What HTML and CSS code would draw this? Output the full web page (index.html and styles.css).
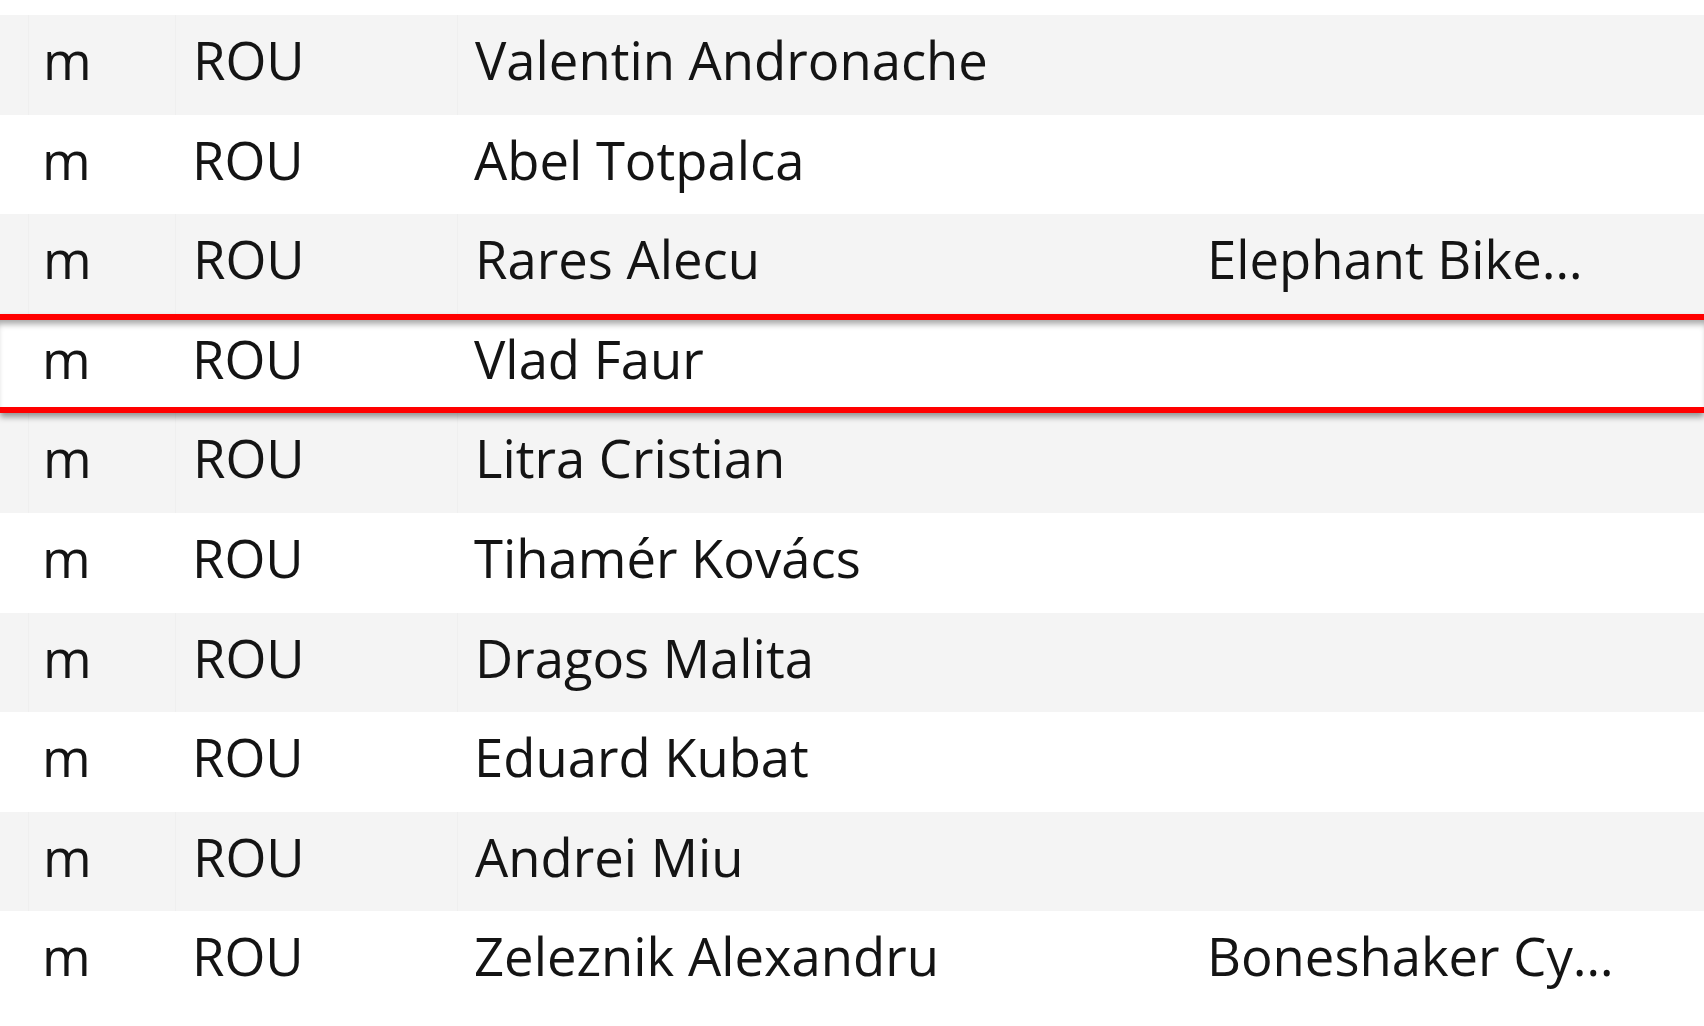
FILE: index.html
```html
<!DOCTYPE html>
<html lang="en">
<head>
<meta charset="utf-8">
<title>Riders</title>
<link rel="stylesheet" href="styles.css">
</head>
<body>
<div class="table">
  <div class="row alt"><div class="c c0"></div><div class="c c1">m</div><div class="c c2">ROU</div><div class="c c3">Valentin Andronache</div><div class="c c4"></div></div>
  <div class="row"><div class="c c0"></div><div class="c c1">m</div><div class="c c2">ROU</div><div class="c c3">Abel Totpalca</div><div class="c c4"></div></div>
  <div class="row alt"><div class="c c0"></div><div class="c c1">m</div><div class="c c2">ROU</div><div class="c c3">Rares Alecu</div><div class="c c4">Elephant Bike…</div></div>
  <div class="row selected"><div class="c c0"></div><div class="c c1">m</div><div class="c c2">ROU</div><div class="c c3">Vlad Faur</div><div class="c c4"></div></div>
  <div class="row alt"><div class="c c0"></div><div class="c c1">m</div><div class="c c2">ROU</div><div class="c c3">Litra Cristian</div><div class="c c4"></div></div>
  <div class="row"><div class="c c0"></div><div class="c c1">m</div><div class="c c2">ROU</div><div class="c c3">Tihamér Kovács</div><div class="c c4"></div></div>
  <div class="row alt"><div class="c c0"></div><div class="c c1">m</div><div class="c c2">ROU</div><div class="c c3">Dragos Malita</div><div class="c c4"></div></div>
  <div class="row"><div class="c c0"></div><div class="c c1">m</div><div class="c c2">ROU</div><div class="c c3">Eduard Kubat</div><div class="c c4"></div></div>
  <div class="row alt"><div class="c c0"></div><div class="c c1">m</div><div class="c c2">ROU</div><div class="c c3">Andrei Miu</div><div class="c c4"></div></div>
  <div class="row"><div class="c c0"></div><div class="c c1">m</div><div class="c c2">ROU</div><div class="c c3">Zeleznik Alexandru</div><div class="c c4">Boneshaker Cy…</div></div>
</div>
</body>
</html>
```
FILE: styles.css
```css
html, body {
  margin: 0;
  padding: 0;
  background: #ffffff;
}
body {
  font-family: "Open Sans", "Noto Sans", sans-serif;
  color: #141414;
  overflow: hidden;
}
.table {
  padding-top: 15px;
  display: flex;
  flex-direction: column;
}
.row {
  display: grid;
  grid-template-columns: 28px 147px 282px 728px 1fr;
  height: 99.6px;
  box-sizing: border-box;
  background: #ffffff;
}
.row.alt {
  background: #f4f4f4;
}
.c {
  font-size: 52.6px;
  line-height: 89.6px;
  padding-bottom: 10px;
  white-space: nowrap;
  overflow: hidden;
  text-overflow: ellipsis;
}
.row.alt .c1, .row.alt .c2, .row.alt .c3 {
  border-left: 1px solid rgba(0, 0, 0, 0.02);
}
.c1 { padding-left: 14px; }
.c2 { padding-left: 17px; }
.c3 { padding-left: 17px; }
.c4 { padding-left: 22px; }
.row.selected {
  position: relative;
  z-index: 1;
  border-top: 6px solid #ff0000;
  border-bottom: 6px solid #ff0000;
  box-shadow: 0 4px 6px rgba(0, 0, 0, 0.4), inset 0 7px 6px -3px rgba(0, 0, 0, 0.35);
}
.row.selected .c {
  line-height: 77.6px;
  padding-bottom: 10px;
}
```
